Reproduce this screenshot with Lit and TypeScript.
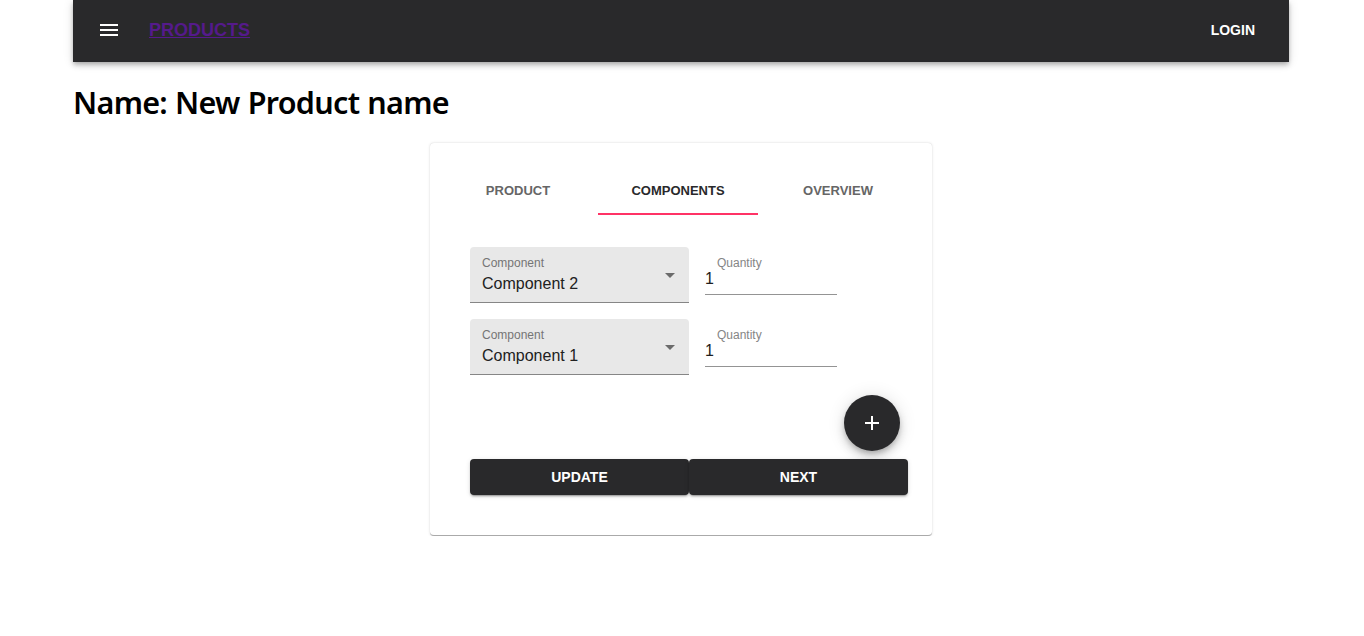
import { LitElement, html, css } from "lit";
import { customElement, property, state } from "lit/decorators.js";

@customElement("component-row")
class ComponentRow extends LitElement {
  @property() name = "";
  @property({ type: Number }) quantity = 1;

  static styles = css`
    :host { display: flex; align-items: flex-start; gap: 16px; height: 56px; }
    .select {
      box-sizing: border-box; width: 219px; height: 56px; padding: 8px 7px 0 12px;
      display: flex; justify-content: space-between;
      background: #e8e8e8; border-bottom: 1px solid #868686; border-radius: 4px 4px 0 0;
    }
    .label { font-size: 12px; line-height: 16px; color: #757575; }
    .value { font-size: 16px; line-height: 19px; color: #212121; }
    .select .value { margin-top: 3px; }
    .arrow { width: 24px; height: 24px; margin-top: 8px; fill: #6b6b6b; }
    .quantity {
      box-sizing: border-box; width: 132px; height: 48px; padding-top: 8px;
      border-bottom: 1px solid #949494;
    }
    .quantity .label { padding-left: 12px; color: #858585; }
    .quantity .value { margin-top: -2px; }
  `;

  render() {
    return html`
      <div class="select">
        <div>
          <div class="label">Component</div>
          <div class="value">${this.name}</div>
        </div>
        <svg class="arrow" viewBox="0 0 24 24"><path d="M7 10l5 5 5-5z" /></svg>
      </div>
      <div class="quantity">
        <div class="label">Quantity</div>
        <div class="value">${this.quantity}</div>
      </div>
    `;
  }
}

@customElement("app-root")
class AppRoot extends LitElement {
  @state() tab = 1;

  static styles = css`
    :host { display: block; width: 1216px; margin-left: 73px; font-family: "Liberation Sans", Arial, sans-serif; }
    .bar {
      box-sizing: border-box; height: 62px; padding: 0 34px 2px 24px;
      display: flex; align-items: center; background: #29292b;
      box-shadow: 0 2px 4px -1px rgba(0,0,0,.2), 0 4px 5px rgba(0,0,0,.14), 0 1px 10px rgba(0,0,0,.12);
    }
    .menu { width: 24px; height: 24px; fill: #fff; }
    .brand { margin-left: 28px; flex: 1; font-size: 18px; line-height: 20px; font-weight: 700; }
    .brand a { color: #551a8b; text-decoration: underline; }
    .login { color: #fff; font-size: 14px; font-weight: 700; }
    h1 {
      margin: 18px 0 19px 0; height: 44px; line-height: 44px;
      font-family: "Noto Sans", sans-serif; font-size: 30.5px; font-weight: 600;
      letter-spacing: -0.7px; word-spacing: 0.8px;
      color: #000; white-space: nowrap;
    }
    .card {
      box-sizing: border-box; width: 502px; height: 393px; margin-left: 357px; padding: 24px 8px 0;
      background: #fff; border-radius: 4px; border-bottom: 1px solid #aaa;
      box-shadow: 0 0 1px rgba(0,0,0,.14), 0 0 3px rgba(0,0,0,.12);
    }
    .tabs { display: flex; }
    .tab {
      box-sizing: border-box; width: 160px; height: 48px;
      display: flex; align-items: center; justify-content: center;
      border-bottom: 2px solid transparent;
      font-size: 13px; font-weight: 700; color: #666;
    }
    .tab.active { color: #29292b; border-color: #ff3366; }
    .form { display: flex; flex-direction: column; padding: 32px 0 0 32px; width: 438px; }
    .rows { display: grid; gap: 16px; }
    .add {
      align-self: flex-end; margin: 20px 8px 8px 0; width: 56px; height: 56px; border-radius: 50%;
      display: grid; place-items: center; background: #29292b;
      box-shadow: 0 3px 5px -1px rgba(0,0,0,.2), 0 6px 10px rgba(0,0,0,.14), 0 1px 18px rgba(0,0,0,.12);
    }
    .add svg { width: 24px; height: 24px; fill: #fff; }
    .actions { display: flex; }
    .button {
      flex: 1; height: 36px; border-radius: 4px; background: #29292b; color: #fff;
      display: grid; place-items: center; font-size: 14px; font-weight: 700;
      box-shadow: 0 3px 1px -2px rgba(0,0,0,.2), 0 2px 2px rgba(0,0,0,.14), 0 1px 5px rgba(0,0,0,.12);
    }
  `;

  render() {
    return html`
      <header class="bar">
        <svg class="menu" viewBox="0 0 24 24"><path d="M3 18h18v-2H3v2zm0-5h18v-2H3v2zm0-7v2h18V6H3z" /></svg>
        <div class="brand"><a>PRODUCTS</a></div>
        <div class="login">LOGIN</div>
      </header>
      <h1>Name: New Product name</h1>
      <section class="card">
        <nav class="tabs">
          ${["PRODUCT", "COMPONENTS", "OVERVIEW"].map(
            (t, i) => html`<div class="tab ${i === this.tab ? "active" : ""}" @click=${() => (this.tab = i)}>${t}</div>`
          )}
        </nav>
        <div class="form">
          <div class="rows">
            <component-row name="Component 2" quantity="1"></component-row>
            <component-row name="Component 1" quantity="1"></component-row>
          </div>
          <div class="add"><svg viewBox="0 0 24 24"><path d="M19 13h-6v6h-2v-6H5v-2h6V5h2v6h6v2z" /></svg></div>
          <div class="actions">
            <div class="button">UPDATE</div>
            <div class="button">NEXT</div>
          </div>
        </div>
      </section>
    `;
  }
}
